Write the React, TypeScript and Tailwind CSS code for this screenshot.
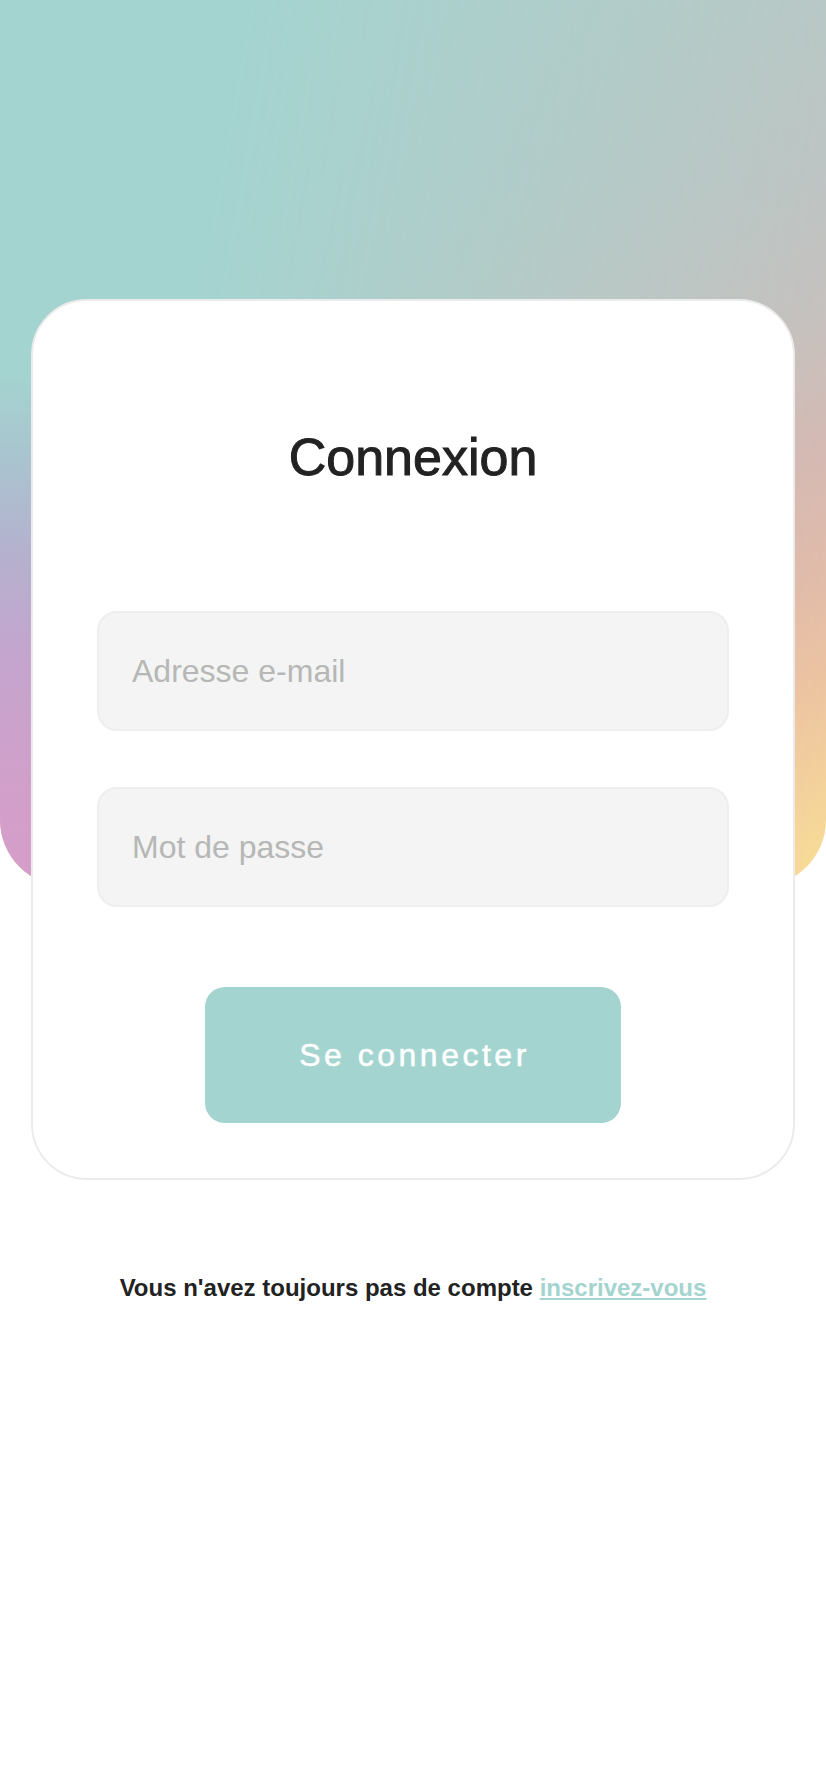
import React from "react";

export default function App() {
  return (
    <div className="min-h-screen bg-white font-['Liberation_Sans',Arial,sans-serif]">
      <div className="h-[886px] overflow-hidden rounded-b-[66px] bg-[linear-gradient(to_bottom,#bec5c3_0%,#c3c1c0_20%,#cbbebc_35%,#dab8b0_50%,#e6bea6_66%,#f0c79e_78%,#f8dc97_96%)]">
        <div className="h-full w-full bg-[linear-gradient(to_bottom,#a4d4d0_0%,#a4d4d0_42%,#a9c5cf_51%,#b4b2cf_62%,#c3a5cd_73%,#d29fca_90%,#d69dca_100%)] [mask-image:linear-gradient(100deg,black_25%,transparent_100%)]" />
      </div>
      <div className="relative -mt-[587px] px-[31px]">
        <div className="rounded-[56px] border-2 border-[#ebebeb] bg-white px-[64px] pt-[126px] pb-[55px]">
          <h1 className="text-center text-[52px] leading-[60px] font-medium text-[#222222] [-webkit-text-stroke:1px_#222222]">
            Connexion
          </h1>
          <div className="mt-[124px] flex flex-col gap-[56px]">
            <input
              type="email"
              placeholder="Adresse e-mail"
              className="h-[120px] w-full rounded-[20px] border-2 border-[#eeeeee] bg-[#f3f4f3] px-[33px] text-[32px] text-[#222222] outline-none placeholder:text-[#b6b7b6]"
            />
            <input
              type="password"
              placeholder="Mot de passe"
              className="h-[120px] w-full rounded-[20px] border-2 border-[#eeeeee] bg-[#f3f4f3] px-[33px] text-[32px] text-[#222222] outline-none placeholder:text-[#b6b7b6]"
            />
          </div>
          <div className="mt-[80px] flex justify-center">
            <button className="h-[136px] w-[416px] rounded-[20px] bg-[#a4d4d0] pl-[3px] text-[32px] font-medium tracking-[3.5px] text-white [-webkit-text-stroke:0.5px_#ffffff]">
              Se connecter
            </button>
          </div>
        </div>
        <p className="mt-[92px] text-center text-[24px] leading-[32px] font-bold text-[#222222]">
          Vous n'avez toujours pas de compte{" "}
          <a href="#" className="text-[#a4d4d0] underline">
            inscrivez-vous
          </a>
        </p>
      </div>
    </div>
  );
}
